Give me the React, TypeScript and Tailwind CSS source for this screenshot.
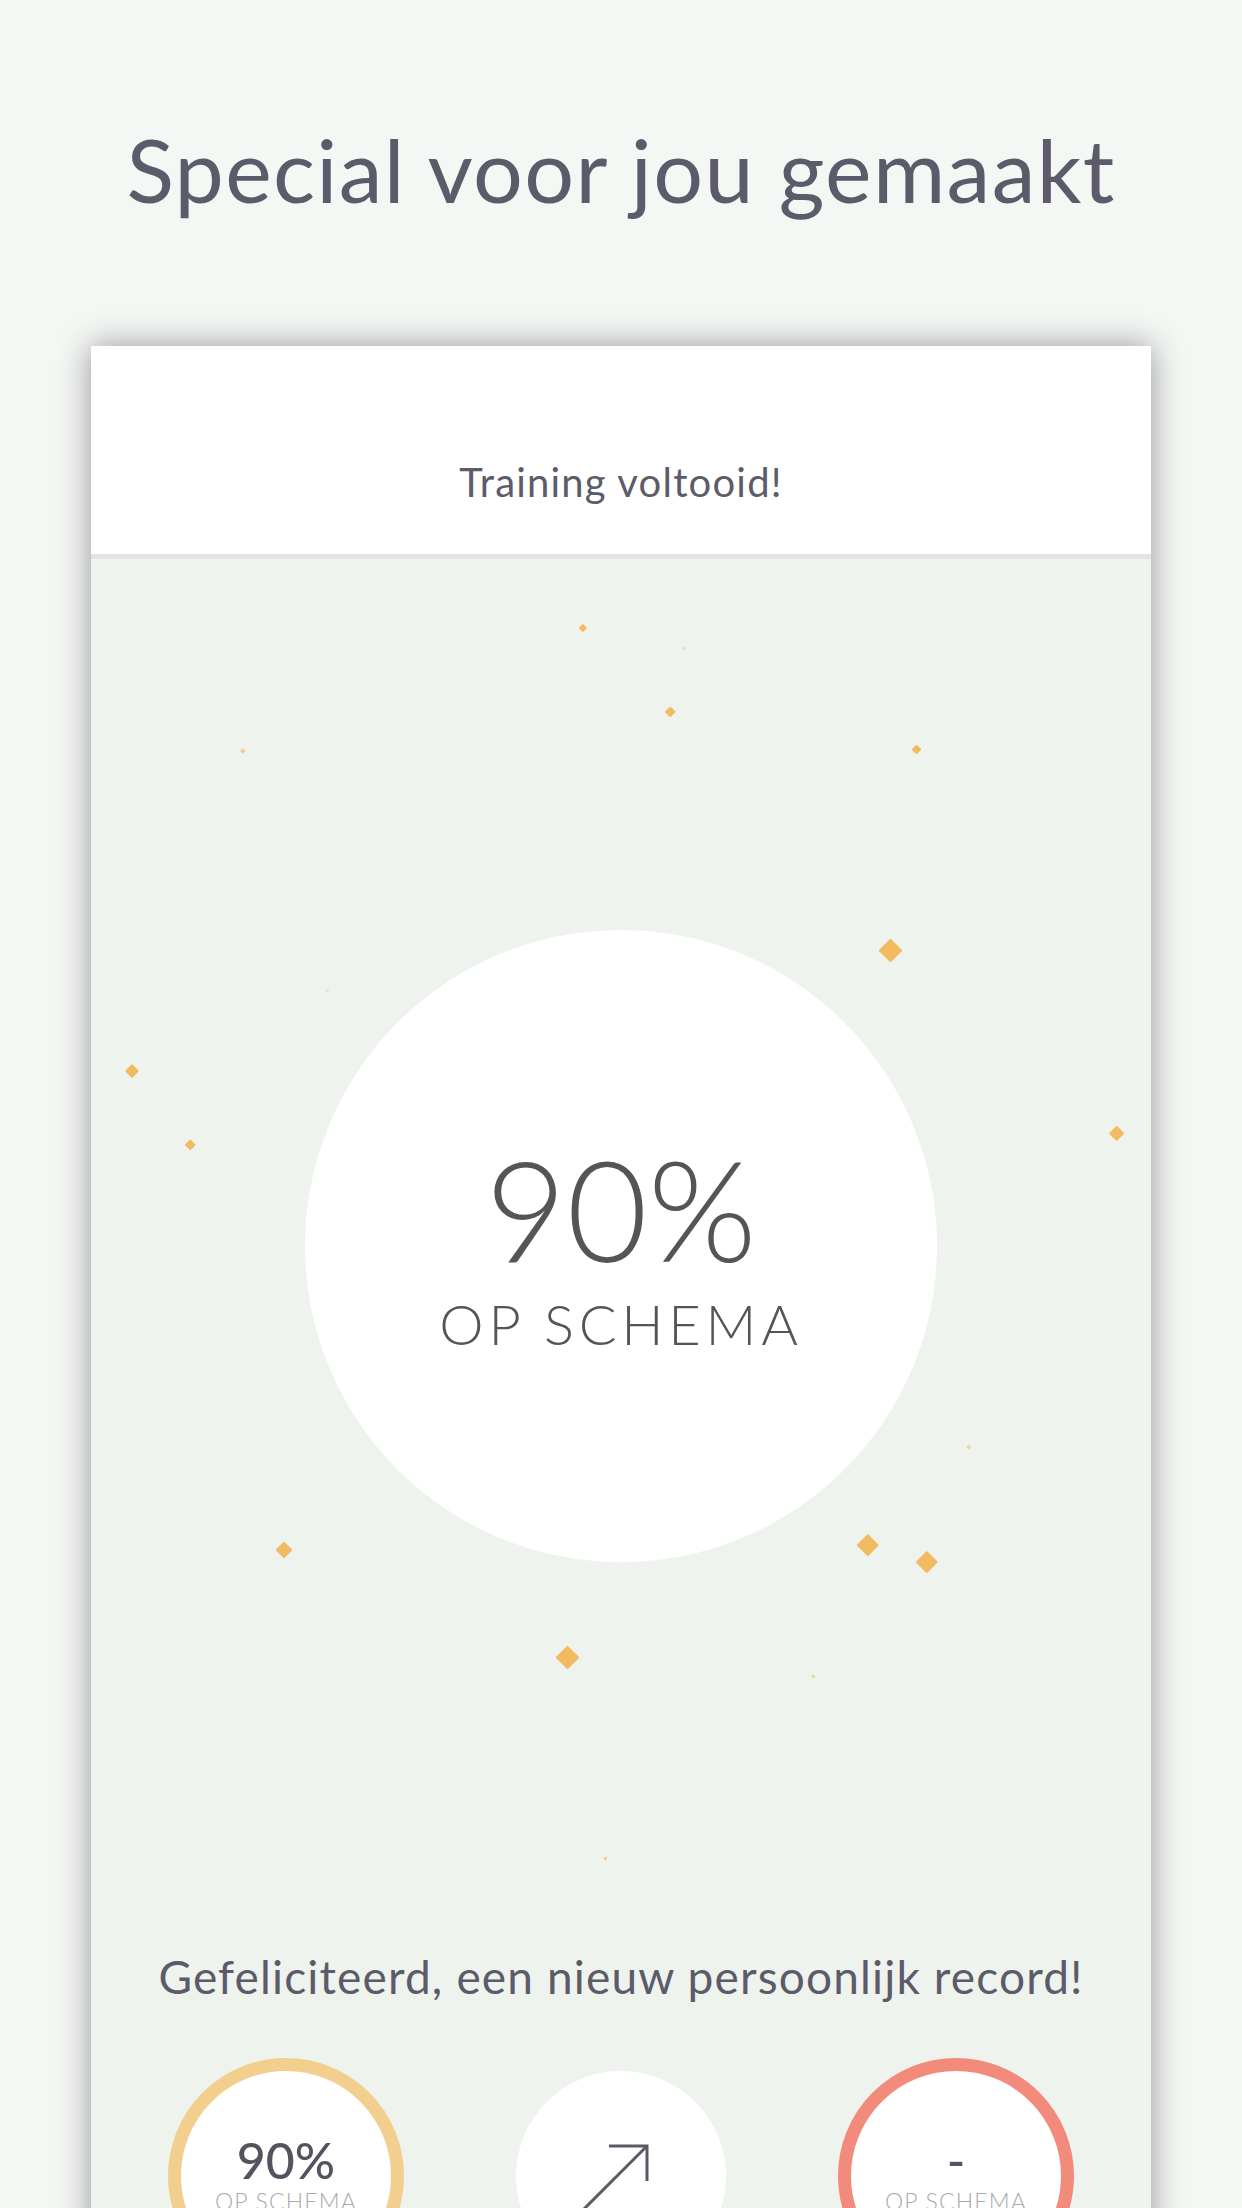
// confetti pieces, page coords (the body starts at x 91, y 559)
const confetti = [
  { x: 583, y: 628, s: 8, o: 1 },
  { x: 684, y: 648, s: 4, o: 0.4 },
  { x: 670, y: 712, s: 12, o: 1 },
  { x: 243, y: 751, s: 5, o: 0.7 },
  { x: 917, y: 750, s: 10, o: 1 },
  { x: 890, y: 950, s: 24, o: 1 },
  { x: 327, y: 990, s: 4, o: 0.3 },
  { x: 132, y: 1071, s: 14, o: 1 },
  { x: 190, y: 1145, s: 12, o: 1 },
  { x: 1117, y: 1134, s: 16, o: 1 },
  { x: 969, y: 1447, s: 5, o: 0.5 },
  { x: 284, y: 1550, s: 17, o: 1 },
  { x: 868, y: 1545, s: 22, o: 1 },
  { x: 927, y: 1562, s: 22, o: 1 },
  { x: 567, y: 1657, s: 24, o: 1 },
  { x: 813, y: 1676, s: 4, o: 0.6 },
  { x: 605, y: 1858, s: 4, o: 0.7 },
];

function Confetti() {
  return (
    <>
      {confetti.map((c, i) => {
        const side = c.s / Math.SQRT2;
        return (
          <span
            key={i}
            className="absolute rotate-45 rounded-[1px] bg-[#f2bb62]"
            style={{
              left: c.x - 91 - side / 2,
              top: c.y - 559 - side / 2,
              width: side,
              height: side,
              opacity: c.o,
            }}
          />
        );
      })}
    </>
  );
}

function RingStat({ ring, value }: { ring: string; value: string }) {
  return (
    <div
      className={`flex h-[236px] w-[236px] shrink-0 flex-col items-center rounded-full border-[13px] bg-white ${ring}`}
    >
      <p className="mt-[64px] text-[50px] leading-none font-medium text-[#54535f]">
        {value}
      </p>
      <p className="mt-[5px] text-[23px] leading-none font-light tracking-[0.05em] text-[#aaaaaa]">
        OP SCHEMA
      </p>
    </div>
  );
}

export default function App() {
  return (
    <div className="flex h-[2208px] flex-col items-center overflow-hidden bg-[#f5f7f4] font-[Lato,sans-serif]">
      <h1 className="shrink-0 pt-[125px] text-[88px] leading-none font-normal tracking-[0.015em] text-[#5c5b69]">
        Special voor jou gemaakt
      </h1>

      <div className="mt-[133px] w-[1060px] shrink-0 shadow-[0_0_30px_rgba(30,30,50,0.45)]">
        {/* Header */}
        <div className="h-[213px] border-b-[5px] border-[#e3e4e2] bg-white pt-[116px] text-center">
          <p className="text-[40px] leading-none font-normal tracking-[0.03em] text-[#5c5b69]">
            Training voltooid!
          </p>
        </div>

        {/* Body */}
        <div className="relative flex h-[1700px] flex-col items-center bg-[#eff3ee]">
          <Confetti />

          <div className="relative mt-[371px] flex h-[632px] w-[632px] shrink-0 flex-col items-center rounded-full bg-white pt-[208px]">
            <p className="text-[140px] leading-none font-light text-[#555555]">
              90%
            </p>
            <p className="mt-[18px] text-[56px] leading-none font-light tracking-[0.085em] text-[#555555]">
              OP SCHEMA
            </p>
          </div>

          <p className="relative mt-[392px] shrink-0 text-[46px] leading-none font-normal tracking-[0.025em] text-[#5c5b69]">
            Gefeliciteerd, een nieuw persoonlijk record!
          </p>

          <div className="relative mt-[58px] flex w-full shrink-0 items-center justify-center gap-[99px]">
            <RingStat ring="border-[#f2cf8f]" value="90%" />
            <div className="mx-[13px] flex h-[210px] w-[210px] shrink-0 justify-center rounded-full bg-white">
              <svg
                width="120"
                height="140"
                viewBox="0 0 120 140"
                fill="none"
                stroke="#5a5a66"
                strokeWidth="3"
                className="mt-[60px] ml-[-18px]"
              >
                {/* arrow corner sits at (652, 2146) */}
                <path d="M57 15 H95 V50" />
                <path d="M95 15 L0 110" />
              </svg>
            </div>
            <RingStat ring="border-[#f28b7b]" value="-" />
          </div>
        </div>
      </div>
    </div>
  );
}
